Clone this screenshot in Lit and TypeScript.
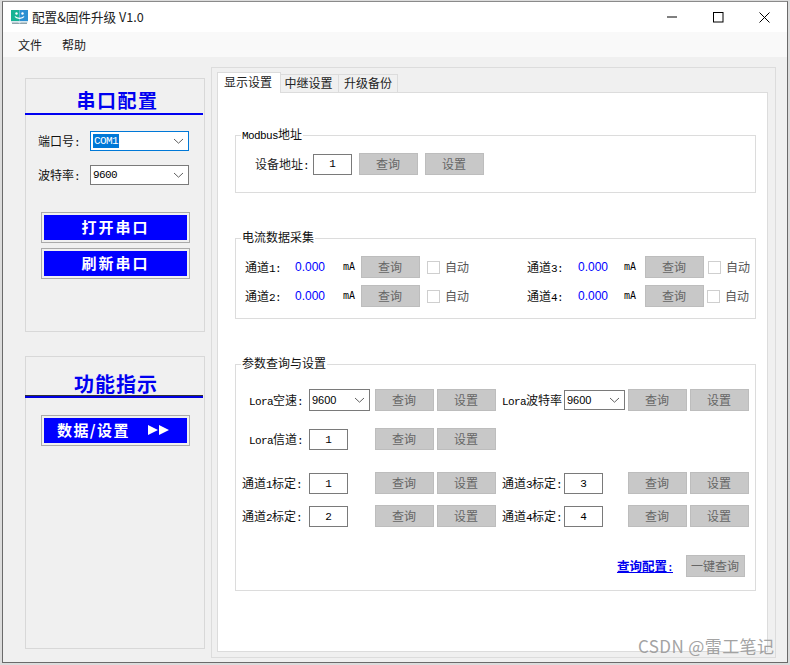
import { LitElement, html, css } from "lit";
import { customElement } from "lit/decorators.js";

const chev = html`<svg class="chev" width="11" height="6" viewBox="0 0 11 6"><path d="M1 1l4.5 4.2L10 1" fill="none" stroke="#606060" stroke-width="1"/></svg>`;

@customElement("app-root")
export class AppRoot extends LitElement {
  static styles = css`
    :host { display: block; width: 790px; height: 665px; background: #dcdcdc; overflow: hidden; position: relative;
      font: 12px/14px "Noto Sans CJK SC", "Noto Sans", sans-serif; color: #111; }
    * { box-sizing: border-box; }
    .win { margin: 1px 2px 0 2px; height: 662px; border: 1px solid #6a6a6a; border-top-color: #8a8a8a; background: #f0f0f0; display: flex; flex-direction: column; }
    .title { height: 30px; background: #fff; display: flex; align-items: center; padding-left: 8px; flex: none; }
    .title .cap { margin-left: 4px; font-size: 12.6px; color: #222; flex: 1; }
    .title .wb { width: 46px; height: 30px; display: flex; align-items: center; justify-content: center; }
    .menu { height: 25px; background: #f9f9f9; display: flex; align-items: center; gap: 20px; padding-left: 15px; flex: none; color: #222; }
    .client { flex: 1; display: flex; padding: 10px 0 4px 22px; min-height: 0; }
    .left { width: 180px; margin-top: 11px; margin-right: 6px; flex: none; }
    .panel { border: 1px solid #d8d8d8; width: 180px; }
    .p1 { height: 254px; }
    .p2 { height: 293px; margin-top: 24px; }
    .head { margin-left: -1px; width: 178px; text-align: center; color: #0000f0; font-weight: 700; display: flex; align-items: center; justify-content: center; }
    .p1 .head { height: 36px; padding: 7px 0 0 7px; font-size: 19px; letter-spacing: 1.5px; border-bottom: 2px solid #0000f0; }
    .p2 .head { height: 41px; padding: 14px 0 0 4px; font-size: 20px; letter-spacing: 1px; border-bottom: 2px solid #0000e0; box-shadow: inset 0 -1px 0 #333; }
    .field { display: flex; align-items: center; height: 20px; padding-left: 12px; }
    .f1 { margin-top: 16px; }
    .f2 { margin-top: 14px; }
    .field .lab { width: 52px; }
    .sel { display: flex; align-items: center; justify-content: space-between; background: #fff; border: 1px solid #7a7a7a; padding: 0 3px 0 2px; height: 20px; font: 11px/14px "Liberation Mono", monospace; letter-spacing: -0.6px; color: #000; }
    .sel.wide { width: 99px; }
    .sel.focus { border-color: #0078d7; }
    .sel.focus b { font-weight: 400; background: #0078d7; color: #fff; padding: 0 1px; }
    .sel.nar { width: 61px; font: 11px/14px "Liberation Sans", sans-serif; letter-spacing: 0; }
    .sel.tall { height: 22px; }
    .chev { margin-right: 1px; }
    .bb { display: block; margin-left: 15px; width: 149px; height: 31px; border: 1px solid #aaa; padding: 2px; background: #f0f0f0; }
    .bb div { height: 25px; background: #0000ff; color: #fff; font-weight: 700; font-size: 15px; letter-spacing: 2px; display: flex; align-items: center; justify-content: center; padding-bottom: 2px; }
    .b1 { margin-top: 27px; }
    .b2 { margin-top: 5px; }
    .b3 { margin-top: 17px; }
    .bb .sp { justify-content: flex-start; padding-left: 13px; gap: 18px; letter-spacing: 1.4px; }
    .tabctl { width: 565px; flex: none; border: 1px solid #dcdcdc; padding: 4px 7px 5px 5px; display: flex; flex-direction: column; }
    .tabs { display: flex; align-items: flex-end; height: 21px; flex: none; position: relative; z-index: 1; margin-bottom: -1px; }
    .tab { height: 19px; width: 58px; border: 1px solid #dcdcdc; border-left: 0; display: flex; align-items: center; justify-content: center; color: #222; padding: 0 2px 2px 0; }
    .tab.on { height: 21px; width: 64px; background: #fff; border: 1px solid #dcdcdc; border-bottom: 0; padding: 0 2px 2px 0; }
    .tab.last { width: 59px; padding: 0 0 2px 0; }
    .page { flex: 1; background: #fff; border: 1px solid #dcdcdc; }
    fieldset { margin: 0 0 0 17px; padding: 0; width: 521px; border: 1px solid #dcdcdc; display: block; min-width: 0; }
    legend { padding: 0 1px 2px; height: 14px; line-height: 12px; color: #111; }
    .m { font: 11px/12px "Liberation Mono", monospace; letter-spacing: -0.6px; color: #000; }
    .g1 { margin-top: 35px; padding: 11px 0 17px 19px; }
    .g1 legend { margin-left: -14px; }
    .g2 { margin-top: 38px; padding: 11px 0 11px 9px; }
    .g2 legend { margin-left: -4px; }
    .g3 { margin-top: 38px; padding: 18px 0 13px 6px; }
    .g3 legend { margin-left: -1px; }
    .row { display: flex; align-items: center; height: 22px; }
    .end { align-items: flex-end; }
    .btn { width: 59px; height: 22px; flex: none; background: #c8c8c8; border: 1px solid #bdbdbd; color: #666; display: flex; align-items: center; justify-content: center; padding-right: 1px; }
    .inp { width: 39px; height: 21px; flex: none; background: #fff; border: 1px solid #7a7a7a; display: flex; align-items: center; justify-content: center; font: 11px/14px "Liberation Mono", monospace; color: #000; }
    .g1 .lab { width: 58px; color: #222; }
    .g1 .btn { margin-left: 7px; }
    .r2 { margin-top: 7px; }
    .ch { width: 50px; }
    .ch.rt { width: 51px; margin-left: 58px; }
    .val { width: 48px; color: #0000ff; font: 12px/14px "Liberation Sans", sans-serif; }
    .val.rt { width: 46px; }
    .unit { width: 18px; font: 10px/14px "DejaVu Sans Mono", monospace; color: #000; }
    .unit.rt { width: 21px; }
    .cb { width: 13px; height: 13px; background: #fff; border: 1px solid #cfcfcf; margin-left: 7px; flex: none; }
    .cb.rt { margin-left: 4px; }
    .cb.rt.t { margin-left: 3px; }
    .auto { margin-left: 5px; width: 24px; color: #555; white-space: nowrap; }
    .pl { width: 67px; white-space: nowrap; align-self: center; }
    .pl.in { padding-left: 7px; }
    .pl.rt { width: 62px; margin-left: 6px; }
    .ctl { width: 61px; flex: none; }
    .q { margin-left: 5px; }
    .s { margin-left: 3px; }
    .q.rt { margin-left: 3px; }
    .mt17 { margin-top: 17px; }
    .mt22 { margin-top: 22px; }
    .mt11 { margin-top: 11px; }
    .foot { margin-top: 28px; justify-content: flex-end; padding-right: 10px; }
    .qc { color: #0000f0; font-weight: 700; font-size: 12.5px; text-decoration: underline; margin-right: 13px; }
    .qc .m { color: #0000f0; font-weight: 700; }
    .mark { position: absolute; left: 638px; top: 634px; font-size: 17px; letter-spacing: .4px; line-height: 24px; color: #9a9a9a; white-space: nowrap; opacity: .9; }
  `;

  private qs(rt = false) {
    return html`<div class="btn q ${rt ? "rt" : ""}">查询</div><div class="btn s">设置</div>`;
  }

  private chan(n: number, rt: boolean, t = false) {
    const c = rt ? "rt" : "";
    return html`<div class="ch ${c}">通道<span class="m">${n}:</span></div>
      <div class="val ${c}">0.000</div><div class="unit ${c}">mA</div><div class="btn">查询</div>
      <div class="cb ${c} ${t ? "t" : ""}"></div><div class="auto">自动</div>`;
  }

  private cal(n: number, rt: boolean, v: string) {
    return html`<div class="pl ${rt ? "rt" : ""}">通道<span class="m">${n}</span>标定<span class="m">:</span></div>
      <div class="ctl"><div class="inp">${v}</div></div>${this.qs(rt)}`;
  }

  render() {
    return html`<div class="win">
      <div class="title">
        <svg width="17" height="16" viewBox="0 0 17 16">
          <path d="M0 1h8.5v11H0z" fill="#17b394"/><path d="M8.5 1H17v11H8.5z" fill="#2b8fd2"/>
          <circle cx="5.5" cy="4.5" r="1.2" fill="#fff"/><circle cx="11.5" cy="4.5" r="1.2" fill="#fff"/>
          <path d="M4 7.5c1.5 2.4 7.5 2.4 9 0" fill="none" stroke="#fff" stroke-width="1.3"/>
          <path d="M0 12h17v1.5H10l-1.5 1-1.5-1H0z" fill="#d5e6ee"/><path d="M1 13.5h6l1.5 1 1.5-1h6V15H1z" fill="#8fa5ad"/>
        </svg>
        <div class="cap">配置&amp;固件升级 V1.0</div>
        <div class="wb"><svg width="12" height="2"><path d="M1 1h10" stroke="#000" stroke-width="1"/></svg></div>
        <div class="wb"><svg width="11" height="11"><rect x=".5" y=".5" width="9.5" height="9.5" fill="none" stroke="#000"/></svg></div>
        <div class="wb"><svg width="11" height="11"><path d="M.5.5l10 10M10.5.5l-10 10" stroke="#000" fill="none"/></svg></div>
      </div>
      <div class="menu"><span>文件</span><span>帮助</span></div>
      <div class="client">
        <div class="left">
          <div class="panel p1">
            <div class="head">串口配置</div>
            <div class="field f1"><div class="lab">端口号<span class="m">:</span></div><div class="sel wide focus"><b>COM1</b>${chev}</div></div>
            <div class="field f2"><div class="lab">波特率<span class="m">:</span></div><div class="sel wide">9600${chev}</div></div>
            <div class="bb b1"><div>打开串口</div></div>
            <div class="bb b2"><div>刷新串口</div></div>
          </div>
          <div class="panel p2">
            <div class="head">功能指示</div>
            <div class="bb b3"><div class="sp">数据/设置
              <svg width="22" height="12" viewBox="0 0 22 12"><path d="M0 1l10 5-10 5zM11 1l10 5-10 5z" fill="#fff"/></svg></div></div>
          </div>
        </div>
        <div class="tabctl">
          <div class="tabs">
            <div class="tab on">显示设置</div><div class="tab">中继设置</div><div class="tab last">升级备份</div>
          </div>
          <div class="page">
            <fieldset class="g1"><legend><span class="m">Modbus</span>地址</legend>
              <div class="row"><div class="lab">设备地址<span class="m">:</span></div><div class="inp">1</div><div class="btn">查询</div><div class="btn">设置</div></div>
            </fieldset>
            <fieldset class="g2"><legend>电流数据采集</legend>
              <div class="row">${this.chan(1, false)}${this.chan(3, true)}</div>
              <div class="row r2">${this.chan(2, false)}${this.chan(4, true, true)}</div>
            </fieldset>
            <fieldset class="g3"><legend>参数查询与设置</legend>
              <div class="row">
                <div class="pl in"><span class="m">Lora</span>空速<span class="m">:</span></div>
                <div class="ctl"><div class="sel nar tall">9600${chev}</div></div>${this.qs()}
                <div class="pl rt"><span class="m">Lora</span>波特率</div>
                <div class="ctl"><div class="sel nar">9600${chev}</div></div>${this.qs(true)}
              </div>
              <div class="row mt17 end"><div class="pl in"><span class="m">Lora</span>信道<span class="m">:</span></div>
                <div class="ctl"><div class="inp">1</div></div>${this.qs()}</div>
              <div class="row mt22 end">${this.cal(1, false, "1")}${this.cal(3, true, "3")}</div>
              <div class="row mt11 end">${this.cal(2, false, "2")}${this.cal(4, true, "4")}</div>
              <div class="row foot"><div class="qc">查询配置<span class="m">:</span></div><div class="btn">一键查询</div></div>
            </fieldset>
          </div>
        </div>
      </div>
    </div>
    <div class="mark">CSDN @雷工笔记</div>`;
  }
}
